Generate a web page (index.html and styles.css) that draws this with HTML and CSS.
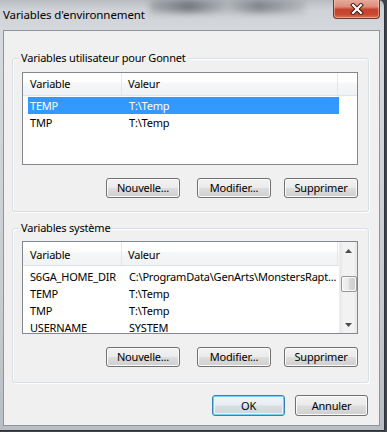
FILE: index.html
```html
<!DOCTYPE html>
<html lang="fr">
<head>
<meta charset="utf-8">
<title>Variables d'environnement</title>
<link rel="stylesheet" href="styles.css">
</head>
<body>
<div class="window">
  <div class="titlebar">
    <div class="glass-blur"></div>
    <span class="title">Variables d'environnement</span>
    <div class="close">
      <svg width="14" height="12" viewBox="0 0 14 12">
        <path d="M3 2 L11 10 M11 2 L3 10" stroke="#3a1410" stroke-width="4" stroke-linecap="square" fill="none"/>
        <path d="M3 2 L11 10 M11 2 L3 10" stroke="#ffffff" stroke-width="2.2" stroke-linecap="square" fill="none"/>
      </svg>
    </div>
  </div>
  <div class="client">
    <section class="group group-user">
      <span class="legend">Variables utilisateur pour Gonnet</span>
      <div class="list">
        <div class="list-header">
          <div class="hcol c1">Variable</div>
          <div class="hcol c2">Valeur</div>
          <div class="hcol c3"></div>
        </div>
        <div class="rows rows-user">
          <div class="row selected"><span class="cell c1">TEMP</span><span class="cell c2">T:\Temp</span></div>
          <div class="row"><span class="cell c1">TMP</span><span class="cell c2">T:\Temp</span></div>
        </div>
      </div>
      <div class="buttons">
        <button class="btn btn-new">Nouvelle...</button>
        <button class="btn btn-mod">Modifier...</button>
        <button class="btn">Supprimer</button>
      </div>
    </section>

    <section class="group group-sys">
      <span class="legend">Variables système</span>
      <div class="list list-scroll">
        <div class="list-main">
          <div class="list-header">
            <div class="hcol c1">Variable</div>
            <div class="hcol c2 last">Valeur</div>
          </div>
          <div class="rows rows-sys">
            <div class="row"><span class="cell c1">S6GA_HOME_DIR</span><span class="cell c2">C:\ProgramData\GenArts\MonstersRapt...</span></div>
            <div class="row"><span class="cell c1">TEMP</span><span class="cell c2">T:\Temp</span></div>
            <div class="row"><span class="cell c1">TMP</span><span class="cell c2">T:\Temp</span></div>
            <div class="row"><span class="cell c1">USERNAME</span><span class="cell c2">SYSTEM</span></div>
          </div>
        </div>
        <div class="vscroll">
          <div class="arrow">
            <svg width="7" height="4" viewBox="0 0 7 4"><path d="M0 4 L3.5 0 L7 4 Z" fill="#4d4d4d"/></svg>
          </div>
          <div class="track">
            <div class="thumb"></div>
          </div>
          <div class="arrow">
            <svg width="7" height="4" viewBox="0 0 7 4"><path d="M0 0 L7 0 L3.5 4 Z" fill="#4d4d4d"/></svg>
          </div>
        </div>
      </div>
      <div class="buttons">
        <button class="btn btn-new">Nouvelle...</button>
        <button class="btn btn-mod">Modifier...</button>
        <button class="btn">Supprimer</button>
      </div>
    </section>

    <div class="footer">
      <button class="btn btn-default">OK</button>
      <button class="btn">Annuler</button>
    </div>
  </div>
</div>
</body>
</html>
```

FILE: styles.css
```css
html, body {
  margin: 0;
  padding: 0;
}

body {
  width: 387px;
  height: 432px;
  overflow: hidden;
  background: #3e444c;
  font-family: "Noto Sans", "Open Sans", sans-serif;
  font-size: 11px;
  letter-spacing: -0.2px;
  color: #000;
}

.window {
  position: relative;
  width: 384px;
  height: 430px;
  border-right: 1px solid #2f343a;
  border-bottom: 1px solid #2f343a;
  border-radius: 0 6px 0 0;
  background: linear-gradient(to bottom, #b9bdc2 0px, #cfd2d6 10px, #d6d9dd 40px, #c8ccd1 300px, #b9bec4 430px);
  overflow: hidden;
}

.titlebar {
  position: relative;
  height: 30px;
  padding-left: 3px;
  display: flex;
  align-items: flex-start;
}

.glass-blur {
  position: absolute;
  left: 150px;
  top: 0;
  width: 155px;
  height: 13px;
  background: linear-gradient(to right, rgba(90,95,100,0.3), rgba(60,65,70,0.6) 25%, rgba(140,145,150,0.35) 50%, rgba(70,75,80,0.55) 70%, rgba(120,125,130,0.2));
  filter: blur(3px);
}

.title {
  position: relative;
  margin-top: 7px;
  line-height: 16px;
  font-size: 11.5px;
  letter-spacing: -0.1px;
  color: #000;
}

.close {
  position: absolute;
  top: -1px;
  right: 4px;
  width: 45px;
  height: 19px;
  border: 1px solid #6b3a33;
  border-top: none;
  border-radius: 0 0 4px 4px;
  background: linear-gradient(to bottom, #e8ae9f 0%, #dc8e7b 40%, #c4442f 55%, #c9472f 80%, #dc7452 100%);
  box-shadow: inset 0 0 0 1px rgba(255,220,210,0.45);
  display: flex;
  align-items: center;
  justify-content: center;
}

.close svg {
  display: block;
  margin-top: 1px;
}

.client {
  margin: 0 4px 0 3px;
  height: 394px;
  border: 1px solid #8d949c;
  background: #f0f0f0;
  display: flex;
  flex-direction: column;
}

.group {
  position: relative;
  margin-left: 8px;
  width: 355px;
  border: 1px solid #d5dfe5;
  border-radius: 3px;
  box-shadow: inset 1px 1px 0 #ffffff, 1px 1px 0 #ffffff;
  display: flex;
  flex-direction: column;
}

.group-user {
  margin-top: 27px;
  height: 152px;
}

.group-sys {
  margin-top: 16px;
  height: 153px;
}

.legend {
  position: absolute;
  top: -9px;
  left: 6px;
  padding: 0 2px;
  line-height: 16px;
  background: #f0f0f0;
}

.list {
  margin-left: 9px;
  margin-top: 13px;
  width: 334px;
  height: 91px;
  border: 1px solid #828790;
  background: #ffffff;
  overflow: hidden;
}

.group-sys .list {
  margin-top: 12px;
}

.list-scroll {
  display: flex;
}

.list-main {
  flex: 1;
  min-width: 0;
}

.list-header {
  display: flex;
  height: 22px;
  border-bottom: 1px solid #dde3ea;
  background: linear-gradient(to bottom, #ffffff 0%, #ffffff 40%, #f6f7f8 45%, #f1f2f4 100%);
}

.hcol {
  line-height: 22px;
  border-right: 1px solid #e3e6ea;
  white-space: nowrap;
}

.hcol.c1 {
  width: 91px;
  padding-left: 7px;
}

.hcol.c2 {
  width: 209px;
  padding-left: 6px;
}

.hcol.c3 {
  flex: 1;
  border-right: none;
}

.list-scroll .list-header {
  height: 23px;
}

.list-scroll .hcol {
  line-height: 25px;
}

.rows-user {
  padding-top: 1px;
}

.rows-sys {
  padding-top: 2px;
}

.row {
  display: flex;
  margin-left: 5px;
  width: 311px;
  height: 17px;
  line-height: 17px;
  white-space: nowrap;
}

.row.selected {
  background: #3399ff;
  color: #ffffff;
}

.cell.c1 {
  width: 92px;
  padding-left: 2px;
  overflow: hidden;
}

.cell.c2 {
  padding-left: 7px;
}

.vscroll {
  width: 17px;
  display: flex;
  flex-direction: column;
  background: linear-gradient(to right, #e6e6e6 0%, #f2f2f2 20%, #f2f2f2 80%, #e6e6e6 100%);
  border-left: 1px solid #eeeeee;
}

.arrow {
  height: 17px;
  display: flex;
  align-items: center;
  justify-content: center;
}

.track {
  flex: 1;
  position: relative;
}

.thumb {
  margin: 17px 0 0 1px;
  width: 14px;
  height: 14px;
  border: 1px solid #979797;
  border-radius: 2px;
  background: linear-gradient(to right, #f3f3f3 0%, #e8e8e8 50%, #d6d6d6 51%, #cfcfcf 100%);
  box-shadow: inset 0 0 0 1px #fafafa;
}

.buttons {
  display: flex;
  justify-content: flex-end;
  margin-top: 13px;
  padding-right: 10px;
}

.btn {
  width: 74px;
  height: 20px;
  padding: 0;
  margin: 0;
  border: 1px solid #707070;
  border-radius: 3px;
  background: linear-gradient(to bottom, #f2f2f2 0%, #ebebeb 48%, #dddddd 52%, #cfcfcf 100%);
  box-shadow: inset 0 0 0 1px #fcfcfc;
  font-family: inherit;
  font-size: 11px;
  letter-spacing: -0.2px;
  color: #000;
  line-height: 16px;
}

.btn-new {
  margin-right: 17px;
}

.btn-mod {
  margin-right: 13px;
}

.footer {
  display: flex;
  justify-content: flex-end;
  margin-top: 12px;
  padding-right: 11px;
}

.footer .btn {
  width: 73px;
  height: 21px;
}

.footer .btn-default {
  margin-right: 10px;
  border-color: #3c7fb1;
  background: linear-gradient(to bottom, #f0f5f8 0%, #e6ecf0 48%, #d8dfe4 52%, #ccd4da 100%);
  box-shadow: inset 0 0 0 1px #6fd1f5, inset 0 0 0 2px #e5f5fb;
}
```
